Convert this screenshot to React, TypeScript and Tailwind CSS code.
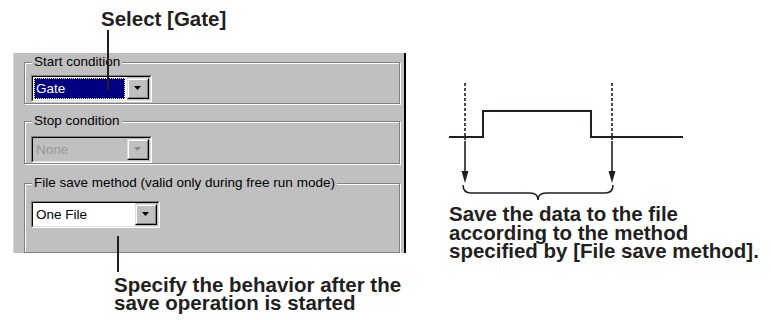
import React from "react";

const font = { fontFamily: '"Liberation Sans", Arial, sans-serif' };

function DropButton({ disabled }: { disabled?: boolean }) {
  return (
    <div className="w-[22px] h-full border border-t-[#dfdfdf] border-l-[#dfdfdf] border-r-black border-b-black">
      <div className="w-full h-full border border-t-white border-l-white border-r-[#808080] border-b-[#808080] bg-[#c0c0c0] flex items-center justify-center">
        <svg width="8" height="5" viewBox="0 0 8 5">
          <polygon points="0,0 7,0 3.5,4" fill={disabled ? "#8a8a8a" : "#000"} />
        </svg>
      </div>
    </div>
  );
}

function Combo({
  width,
  value,
  variant,
}: {
  width: string;
  value: string;
  variant: "selected" | "disabled" | "normal";
}) {
  return (
    <div className={`${width} h-[27px] border border-t-[#808080] border-l-[#808080] border-r-white border-b-white`}>
      <div className="w-full h-full border border-t-black border-l-black border-r-[#dfdfdf] border-b-[#dfdfdf] flex">
        {variant === "selected" && (
          <div className="flex-1 bg-white p-[1px] pr-[2px]">
            <div className="w-full h-full bg-[#000080] border border-dotted border-[#f0f0b0] flex items-center pl-[1px]">
              <span className="text-[13.5px] leading-none text-white">{value}</span>
            </div>
          </div>
        )}
        {variant === "disabled" && (
          <div className="flex-1 bg-[#c0c0c0] flex items-center pl-[3px] pr-[2px]">
            <span className="text-[13.5px] leading-none text-[#9a9a9a]">{value}</span>
          </div>
        )}
        {variant === "normal" && (
          <div className="flex-1 bg-white flex items-center pl-[3px] pr-[2px]">
            <span className="text-[13.5px] leading-none text-black">{value}</span>
          </div>
        )}
        <div className="py-[1px] pr-[1px] h-full">
          <DropButton disabled={variant === "disabled"} />
        </div>
      </div>
    </div>
  );
}

function Group({
  label,
  height,
  className,
  children,
}: {
  label: string;
  height: string;
  className?: string;
  children: React.ReactNode;
}) {
  return (
    <div
      className={`relative ${height} w-[376px] border border-[#808080] shadow-[inset_1px_1px_0_#fff,1px_1px_0_#fff] ${className ?? ""}`}
    >
      <span className="absolute left-[7px] top-[-9px] bg-[#c0c0c0] px-[2px] text-[13.5px] leading-[16px] text-black whitespace-nowrap">
        {label}
      </span>
      {children}
    </div>
  );
}

export default function App() {
  return (
    <div className="relative w-[771px] h-[320px] bg-white overflow-hidden flex" style={font}>
      {/* Left column */}
      <div className="w-[406px] flex flex-col">
        <div className="h-[53px] pt-[10px] pl-[101px]">
          <span className="font-bold text-[20.5px] leading-[18px] text-[#231f20] whitespace-nowrap block">
            Select [Gate]
          </span>
        </div>
        <div className="ml-[13px] w-[393px] h-[200px] bg-[#c0c0c0] border-l border-l-[#d8d8d8] border-r-2 border-r-black overflow-hidden pl-[10px] pt-[9px] flex flex-col">
          <Group label="Start condition" height="h-[53px]" className="pt-[12px] pl-[6px]">
            <Combo width="w-[121px]" value="Gate" variant="selected" />
          </Group>
          <Group label="Stop condition" height="h-[52px]" className="mt-[17px] pt-[14px] pl-[6px]">
            <Combo width="w-[121px]" value="None" variant="disabled" />
          </Group>
          <Group
            label="File save method (valid only during free run mode)"
            height="h-[90px]"
            className="mt-[19px] pt-[17px] pl-[6px]"
          >
            <Combo width="w-[129px]" value="One File" variant="normal" />
          </Group>
        </div>
        <div className="pt-[23px] pl-[114px]">
          <p className="font-bold text-[20.5px] leading-[18px] text-[#231f20] whitespace-nowrap">
            Specify the behavior after the
            <br />
            save operation is started
          </p>
        </div>
      </div>

      {/* Right column */}
      <div className="flex-1 flex flex-col">
        <svg width="365" height="204" viewBox="406 0 365 204" className="block">
          <g stroke="#231f20" fill="none">
            <line x1="465" y1="83" x2="465" y2="140" strokeWidth="1.6" strokeDasharray="3 2" />
            <line x1="612" y1="83" x2="612" y2="140" strokeWidth="1.6" strokeDasharray="3 2" />
            <polyline points="449,137 483,137 483,111 591,111 591,137 683,137" strokeWidth="2" />
            <line x1="465" y1="141" x2="465" y2="174" strokeWidth="1.6" />
            <line x1="612" y1="141" x2="612" y2="174" strokeWidth="1.6" />
            <path
              d="M463,185 Q463,193 471,193 L530,193 Q538,193 538,200 Q538,193 546,193 L605,193 Q613,193 613,185"
              strokeWidth="1.5"
            />
          </g>
          <polygon points="461.5,171 468.5,171 465,183" fill="#231f20" />
          <polygon points="608.5,171 615.5,171 612,183" fill="#231f20" />
        </svg>
        <div className="pl-[43px] pt-[1px]">
          <p className="font-bold text-[20.5px] leading-[18.5px] text-[#231f20] whitespace-nowrap">
            Save the data to the file
            <br />
            according to the method
            <br />
            specified by [File save method].
          </p>
        </div>
      </div>

      {/* Leader lines (annotations over the panel) */}
      <div className="absolute left-[107px] top-[30px] w-[1.5px] h-[60px] bg-[#231f20]" />
      <div className="absolute left-[117px] top-[236px] w-[1.5px] h-[36px] bg-[#231f20]" />
    </div>
  );
}
